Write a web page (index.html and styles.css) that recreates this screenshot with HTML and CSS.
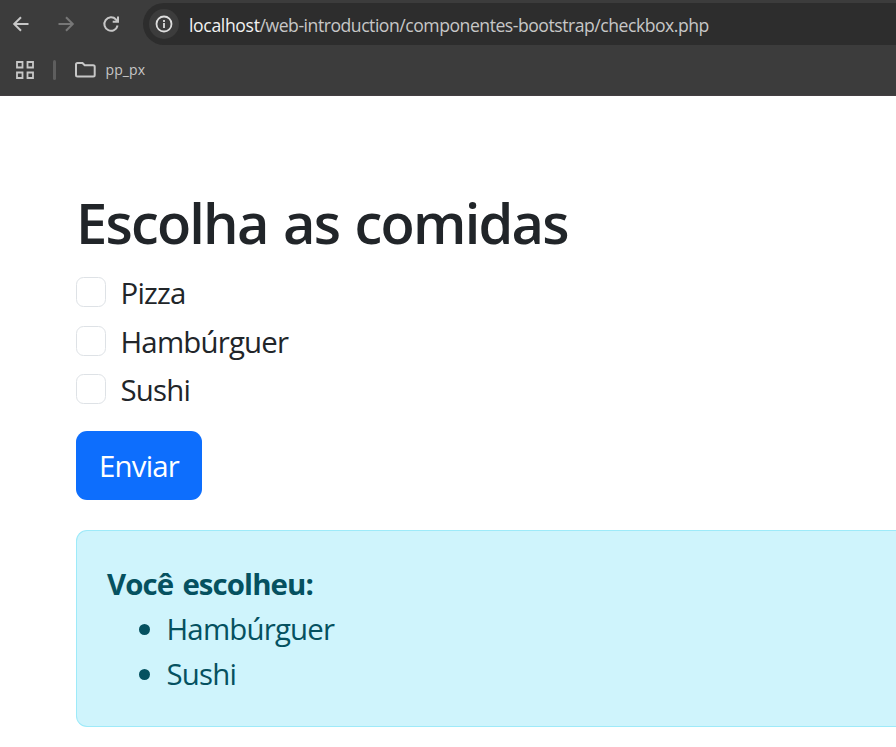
FILE: index.html
```
<!DOCTYPE html>
<html lang="pt-br">
<head>
<meta charset="utf-8">
<title>Checkbox</title>
<link rel="stylesheet" href="styles.css">
</head>
<body>
<header class="browser">
  <div class="toolbar">
    <svg class="nav" viewBox="0 0 20 20"><path d="M17.500 10H3.500M10 3.200 3.200 10l6.800 6.800"/></svg>
    <svg class="nav nav-off" viewBox="0 0 20 20"><path d="M2.500 10h14M10 3.200 16.800 10 10 16.800"/></svg>
    <svg class="nav" viewBox="0 0 20 20"><path d="M16.600 11.500A6.700 6.700 0 1 1 15 5.500l1.800 1.800M17 2.500v5.300h-5.300"/></svg>
    <div class="address">
      <span class="info"><svg viewBox="0 0 20 20"><circle cx="10" cy="10" r="7.500"/><path d="M10 9v5M10 6v1.900"/></svg></span>
      <span class="url"><b>localhost</b>/web-introduction/componentes-bootstrap/checkbox.php</span>
    </div>
  </div>
  <div class="bookmarks">
    <svg class="grid" viewBox="0 0 18 18"><path d="M1 1h5.500v5.500H1zM11.500 1H17v5.500h-5.500zM1 11.500h5.500V17H1zM11.500 11.500H17V17h-5.500z"/></svg>
    <i class="divider"></i>
    <svg class="folder" viewBox="0 0 21 16"><path d="M1 2.500Q1 1 2.500 1h5l2.200 2.300h8.500q1.500 0 1.500 1.500v8.200q0 1.500-1.500 1.500H2.500Q1 14.500 1 13z"/></svg>
    <span class="bookmark">pp_px</span>
  </div>
</header>
<main class="page">
  <h1>Escolha as comidas</h1>
  <form>
    <label class="check"><input type="checkbox"><span>Pizza</span></label>
    <label class="check"><input type="checkbox"><span>Hambúrguer</span></label>
    <label class="check"><input type="checkbox"><span>Sushi</span></label>
    <button type="button">Enviar</button>
  </form>
  <section class="alert">
    <strong>Você escolheu:</strong>
    <ul>
      <li><span>Hambúrguer</span></li>
      <li><span>Sushi</span></li>
    </ul>
  </section>
</main>
</body>
</html>
```
FILE: styles.css
```
* { box-sizing: border-box; }
body {
  margin: 0;
  height: 747px;
  overflow: hidden;
  background: #fff;
  color: #212529;
  font: 29.4px/45px "Open Sans", "Noto Sans", sans-serif;
  letter-spacing: -0.8px;
}
svg { display: block; fill: none; stroke: #c7c7c7; stroke-width: 2; flex: none; }
.browser { height: 96px; background: #3c3c3c; border-bottom: 1px solid #443f42; letter-spacing: 0; }
.toolbar { display: flex; align-items: center; height: 48px; padding-left: 10.500px; }
.nav { width: 20px; height: 20px; margin-right: 25px; }
.nav-off { stroke: #777; }
.address {
  display: flex;
  align-items: center;
  flex: 1;
  height: 42px;
  margin-left: -2.500px;
  padding-left: 6px;
  background: #2d2d2d;
  border-radius: 21px 0 0 21px;
}
.info { display: grid; place-items: center; width: 30px; height: 30px; border-radius: 50%; background: #3c3c3c; }
.info svg { width: 20px; height: 20px; stroke: #dedede; stroke-width: 1.8; }
.url { margin-left: 10px; padding-top: 1px; font-size: 17.600px; line-height: 24px; color: #c7c7c7; letter-spacing: -0.47px; white-space: nowrap; }
.url b { font-weight: 400; color: #f2f2f2; letter-spacing: -0.35px; }
.bookmarks { display: flex; align-items: center; height: 44px; padding-left: 16px; }
.grid { width: 18px; height: 18px; stroke-width: 1.800; }
.divider { width: 3px; height: 20px; margin: 0 19px; border-radius: 2px; background: #5e5e5e; }
.folder { width: 21px; height: 16px; }
.bookmark { margin-left: 9.500px; font-size: 14px; line-height: 20px; color: #c7c7c7; letter-spacing: 0.1px; }
.page { padding: 92px 0 0 76px; }
h1 { margin: 0 0 14.900px; font-size: 56px; line-height: 68px; font-weight: 600; letter-spacing: -1.8px; word-spacing: 2.700px; white-space: nowrap; }
.check { display: flex; height: 45px; margin-bottom: 3.750px; }
.check input {
  appearance: none;
  width: 30px;
  height: 30px;
  margin: 6px 15px 0 0;
  border: 1px solid #dee2e6;
  border-radius: 7.500px;
  background: #fff;
}
.check span { margin-left: -0.500px; }
button {
  display: block;
  width: 126px;
  height: 69px;
  margin-top: 17.600px;
  padding: 2px 0 0;
  border: 0;
  border-radius: 11px;
  background: #0d6efd;
  color: #fff;
  font: inherit;
  letter-spacing: -0.8px;
}
.alert {
  height: 197px;
  margin-top: 30px;
  padding: 31px 30px;
  border: 1px solid #9eeaf9;
  border-right: 0;
  border-radius: 11px 0 0 11px;
  background: #cff4fc;
  color: #055160;
}
strong { display: block; font-weight: 700; letter-spacing: -0.9px; word-spacing: 2.500px; }
ul { margin: 0; padding: 0 0 0 32px; list-style: none; }
li { display: flex; align-items: center; height: 45px; }
li::before { content: ""; width: 11px; height: 11px; margin-right: 16.500px; border-radius: 50%; background: #055160; }
```
